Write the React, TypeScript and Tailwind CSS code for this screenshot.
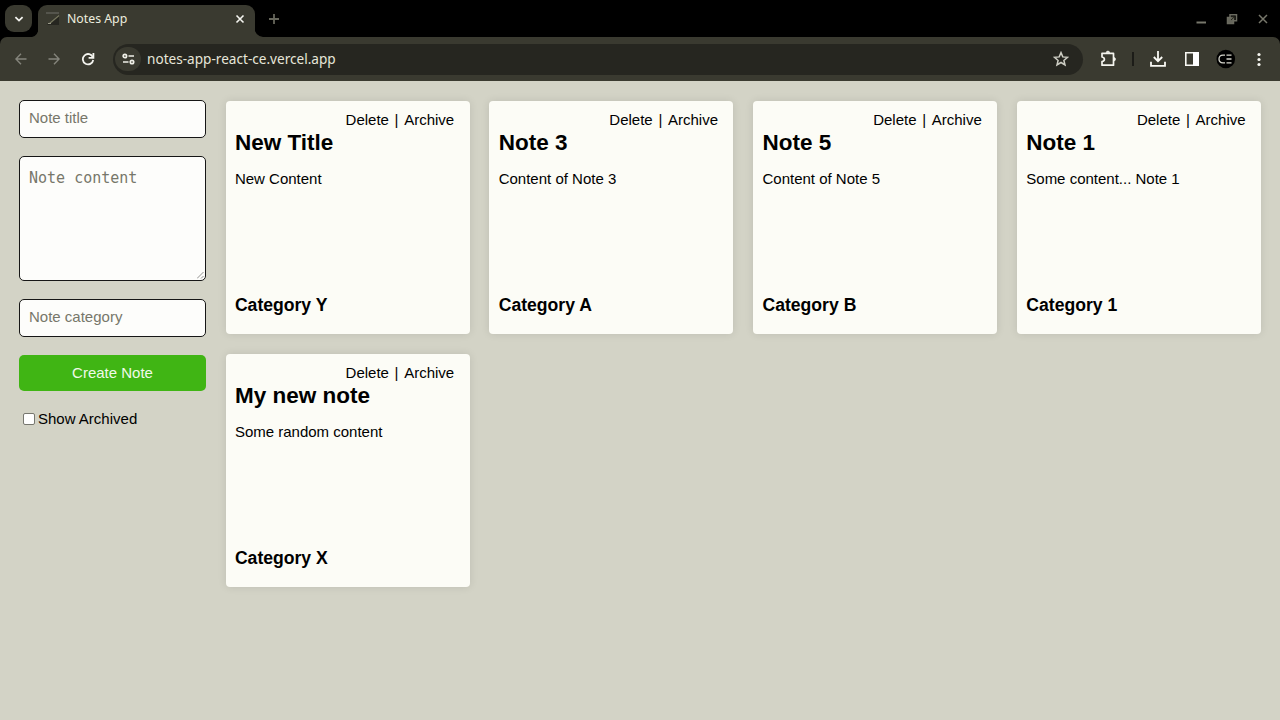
import React from "react";

type Note = { title: string; content: string; category: string };

const notes: Note[] = [
  { title: "New Title", content: "New Content", category: "Category Y" },
  { title: "Note 3", content: "Content of Note 3", category: "Category A" },
  { title: "Note 5", content: "Content of Note 5", category: "Category B" },
  { title: "Note 1", content: "Some content... Note 1", category: "Category 1" },
  { title: "My new note", content: "Some random content", category: "Category X" },
];

function TabStrip() {
  return (
    <div className="flex h-[37px] items-start bg-black">
      <button className="mt-[5px] ml-[5px] flex h-[27px] w-[27px] items-center justify-center rounded-[9px] bg-[#3a3a30]">
        <svg width="10" height="8" viewBox="0 0 10 8" fill="none" stroke="#f4f4f0" strokeWidth="1.8">
          <path d="M1.4 2.2 5 5.6 8.6 2.2" />
        </svg>
      </button>
      <svg className="mt-[27px] -mr-px" width="7" height="10" viewBox="0 0 7 10">
        <path d="M7 0v10H0Q6 9 7 0Z" fill="#3a3a30" />
      </svg>
      <div className="mt-[5px] flex h-[32px] w-[217px] items-center rounded-t-[9px] bg-[#3a3a30] pr-[10px] pb-[4px] pl-[7px]">
        <svg width="16" height="16" viewBox="0 0 16 16" fill="none">
          <path d="M1 2h13" stroke="#62625b" strokeWidth="1.400" />
          <path d="M2 14 13 4l1 1v9Z" fill="#262620" />
          <path d="m4.500 12.500 9.500-8" stroke="#77775f" strokeWidth="1.300" />
          <path d="M3 12.500h3" stroke="#999988" />
        </svg>
        <span className="ml-[6px] text-[12.300px] leading-4 text-[#ededdf]">Notes App</span>
        <svg className="ml-auto" width="10" height="10" viewBox="0 0 10 10" stroke="#f5f5f0" strokeWidth="1.600">
          <path d="m1.500 1.500 7 7m0-7-7 7" />
        </svg>
      </div>
      <svg className="mt-[27px] -ml-px" width="9" height="10" viewBox="0 0 9 10">
        <path d="M0 0v10H9Q1 9 0 0Z" fill="#3a3a30" />
      </svg>
      <svg className="mt-[14px] ml-[6px]" width="10" height="10" viewBox="0 0 10 10" stroke="#66665b" strokeWidth="1.800">
        <path d="M5 0v10M0 5h10" />
      </svg>
      <div className="mt-[13px] mr-[11px] ml-auto flex items-center gap-[19px]">
        <svg width="12" height="12" viewBox="0 0 12 12">
          <path d="M1.500 9.500h9.500" stroke="#77776b" strokeWidth="2" />
        </svg>
        <svg width="12" height="12" viewBox="0 0 12 12" fill="none" stroke="#6b6b60" strokeWidth="1.500">
          <path d="M4 1.700h6.500v6.100H4Z" />
          <path d="M1.500 4.500h6v6h-6Z" fill="#66665b" />
          <path d="M5 7 8.500 3.800M5.500 3.800h3v3" stroke="#26261c" strokeWidth="1" />
        </svg>
        <svg width="12" height="12" viewBox="0 0 12 12" stroke="#77776b" strokeWidth="1.500">
          <path d="m2 2 8 8m0-8-8 8" />
        </svg>
      </div>
    </div>
  );
}

function Toolbar() {
  return (
    <div className="bg-black">
      <div className="flex h-[44px] items-center rounded-t-[7px] bg-[#3a3a30]">
        <svg className="ml-[15px]" width="12" height="12" viewBox="0 0 12 12" fill="none" stroke="#85857c" strokeWidth="1.400">
          <path d="M11.500 6H1M6 .8.9 6 6 11.200" />
        </svg>
        <svg className="ml-[21px]" width="12" height="12" viewBox="0 0 12 12" fill="none" stroke="#85857c" strokeWidth="1.400">
          <path d="M.5 6H11M6 .8 11.100 6 6 11.200" />
        </svg>
        <svg className="ml-[21px]" width="14" height="14" viewBox="0 0 14 14" fill="none" stroke="#f3f3ee" strokeWidth="1.800">
          <path d="M11.900 5.300A5.200 5.200 0 1 0 12.200 8" />
          <path d="M12.400 1v4.800H7.600" />
        </svg>
        <div className="ml-[18px] flex h-[31px] w-[970px] items-center rounded-full bg-[#262620]">
          <div className="ml-[2px] flex h-[24px] w-[26px] items-center justify-center rounded-full bg-[#3a3a30]">
            <svg width="13" height="12" viewBox="0 0 13 12" fill="none" stroke="#f0f0e8" strokeWidth="1.700">
              <circle cx="2.900" cy="3" r="1.700" />
              <path d="M6.500 3H12M1 9h5.500" />
              <circle cx="10" cy="9" r="1.700" />
            </svg>
          </div>
          <span className="ml-[6px] text-[13.600px] leading-5 text-[#e6e6da]">notes-app-react-ce.vercel.app</span>
          <svg className="mr-[14px] ml-auto" width="16" height="16" viewBox="0 0 16 16" fill="none" stroke="#cdcdc3" strokeWidth="1.500">
            <path d="m8 1.600 1.800 4.300 4.700.4-3.600 3.100 1.100 4.600L8 11.500 4 14l1.100-4.600-3.600-3.100 4.700-.4Z" />
          </svg>
        </div>
        <svg className="mb-px ml-[17px]" width="17" height="17" viewBox="0 0 17 17" fill="none" stroke="#f4f4ee" strokeWidth="1.700">
          <path d="M2 3.300h11.500v11.900H2v-3.700Q4.400 11 4.400 9.200T2 7Z" strokeLinejoin="round" />
          <path d="M6.200 2.800a1.700 1.700 0 0 1 3.400 0ZM13.800 7.500a1.700 1.700 0 0 1 0 3.400Z" fill="#f4f4ee" strokeWidth=".7" />
        </svg>
        <div className="ml-[15px] h-[14px] w-[2px] bg-[#1c1c18]" />
        <svg className="ml-[16px]" width="16" height="16" viewBox="0 0 16 16" fill="none" stroke="#fafaf5" strokeWidth="1.800">
          <path d="M8 0v10M3.800 6 8 10.200 12.200 6M1 10.800V14.800h14v-4" />
        </svg>
        <svg className="ml-[19px]" width="14" height="14" viewBox="0 0 14 14">
          <path d="M.8.8h12.400v12.400H.8Z" fill="none" stroke="#f8f8f4" strokeWidth="1.600" />
          <path d="M8 0h6v14H8Z" fill="#fff" />
        </svg>
        <svg className="ml-[17px]" width="20" height="20" viewBox="0 0 20 20">
          <circle cx="9.800" cy="10" r="9.300" fill="#000" />
          <path d="M9 6.200H7Q3 6.200 3 10t4 3.800h2M10.500 6.200h5M10.500 10h5M10.500 13.800h5" fill="none" stroke="#d5d5cc" strokeWidth="1.300" />
        </svg>
        <svg className="ml-[20px]" width="6" height="15" viewBox="0 0 6 15" fill="#f6f6f0">
          <circle cx="3" cy="2.500" r="1.600" />
          <circle cx="3" cy="7.500" r="1.600" />
          <circle cx="3" cy="12.500" r="1.600" />
        </svg>
      </div>
    </div>
  );
}

const field =
  "block w-full resize-none rounded-[5px] border border-[#161616] bg-[#fdfdfb] px-[9px] text-[15px] placeholder-[#77776a] outline-none";

function NoteForm() {
  return (
    <form className="flex w-[187px] shrink-0 flex-col gap-[18px]">
      <input className={`${field} h-[38px] pb-[3px]`} placeholder="Note title" />
      <div className="relative">
        <textarea
          className={`${field} h-[125px] py-[11px] font-['DejaVu_Sans_Mono',monospace] leading-[20px]`}
          placeholder="Note content"
        />
        <svg className="absolute right-[2px] bottom-[2px]" width="7" height="7" viewBox="0 0 7 7" stroke="#777" strokeWidth=".8">
          <path d="M0 6.500 6.500 0M4 6.500 6.500 4" />
        </svg>
      </div>
      <input className={`${field} h-[38px] pb-[3px]`} placeholder="Note category" />
      <button type="button" className="h-[36px] rounded-[5px] bg-[#40b514] text-[15px] text-[#f0fae9]">
        Create Note
      </button>
      <label className="ml-[4px] flex h-[20px] items-center">
        <input type="checkbox" className="h-[12px] w-[12px] appearance-none rounded-[2px] border border-[#77776f] bg-white" />
        <span className="ml-[3px] text-[15px] leading-5">Show Archived</span>
      </label>
    </form>
  );
}

function NoteCard({ note }: { note: Note }) {
  return (
    <article className="flex h-[233px] flex-col rounded-[4px] bg-[#fcfcf6] px-[9.400px] shadow-[0_0_9px_rgba(0,0,0,0.100)]">
      <div className="mt-[9px] flex h-[20px] justify-end gap-[5.700px] pr-[6px] text-[15px] leading-[20px]">
        <span>Delete</span>
        <span>|</span>
        <span>Archive</span>
      </div>
      <h2 className="text-[22.500px] leading-[26px] font-bold">{note.title}</h2>
      <p className="mt-[13px] text-[15px] leading-[20px]">{note.content}</p>
      <h3 className="mt-auto mb-[18px] text-[17.600px] leading-[22px] font-bold">{note.category}</h3>
    </article>
  );
}

export default function App() {
  return (
    <div className="flex h-[720px] w-[1280px] flex-col overflow-hidden bg-[#d3d3c6] text-black">
      <header className="font-['Noto_Sans',sans-serif]">
        <TabStrip />
        <Toolbar />
      </header>
      <main className="flex flex-1 items-start gap-[19px] pt-[19px] pr-[19px] pl-[19px] font-['Liberation_Sans',Arial,sans-serif]">
        <NoteForm />
        <section className="mt-[0.500px] ml-[0.500px] grid flex-1 grid-cols-4 gap-x-[19.700px] gap-y-[20px]">
          {notes.map((note) => (
            <NoteCard key={note.title} note={note} />
          ))}
        </section>
      </main>
    </div>
  );
}
